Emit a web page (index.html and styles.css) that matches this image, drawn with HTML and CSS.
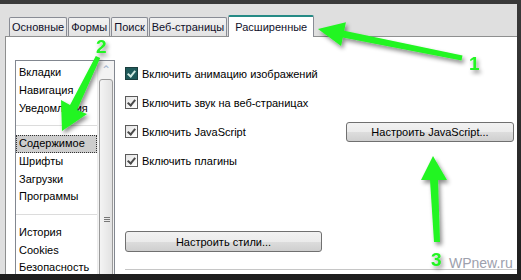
FILE: index.html
```html
<!DOCTYPE html>
<html lang="ru">
<head>
    <meta charset="UTF-8">
    <title>Настройки — Расширенные</title>
    <link rel="stylesheet" href="styles.css">
</head>
<body>

<div class="frame">
    <div class="window">
        <div class="tabs">
            <div class="tab">Основные</div>
            <div class="tab">Формы</div>
            <div class="tab">Поиск</div>
            <div class="tab">Веб-страницы</div>
            <div class="tab active">Расширенные</div>
        </div>

        <div class="pane">
            <div class="list">
                <div class="items">
                    <div class="item">Вкладки</div>
                    <div class="item">Навигация</div>
                    <div class="item">Уведомления</div>
                    <div class="sep"></div>
                    <div class="item selected">Содержимое</div>
                    <div class="item">Шрифты</div>
                    <div class="item">Загрузки</div>
                    <div class="item">Программы</div>
                    <div class="sep"></div>
                    <div class="item">История</div>
                    <div class="item">Cookies</div>
                    <div class="item">Безопасность</div>
                </div>
                <div class="scrollbar">
                    <div class="scroll-up">&#8963;</div>
                    <div class="thumb"><span class="grip"></span></div>
                </div>
            </div>

            <div class="content">
                <div class="row">
                    <span class="check focused"></span>
                    <span>Включить анимацию изображений</span>
                </div>
                <div class="row">
                    <span class="check"></span>
                    <span>Включить звук на веб-страницах</span>
                </div>
                <div class="row">
                    <span class="check"></span>
                    <span>Включить JavaScript</span>
                    <button class="btn btn-js">Настроить JavaScript...</button>
                </div>
                <div class="row">
                    <span class="check"></span>
                    <span>Включить плагины</span>
                </div>

                <button class="btn btn-styles">Настроить стили...</button>
                <div class="rule"></div>
            </div>
        </div>
    </div>

    <div class="watermark">WPnew.ru</div>

    <!-- green annotation arrows drawn over the screenshot -->
    <svg class="marks" width="521" height="280" viewBox="0 0 521 280">
        <defs>
            <filter id="shade" x="-20%" y="-20%" width="140%" height="140%">
                <feDropShadow dx="2" dy="3" stdDeviation="2" flood-color="#000" flood-opacity="0.45"/>
            </filter>
        </defs>
        <g fill="#22f522" filter="url(#shade)">
            <polygon points="318,29 345.9,22.3 344.2,30.7 462.5,55.5 461.5,60.5 342.8,37.5 341.1,45.9"/>
            <polygon points="62,131 61,100 70,105 95.8,55.9 100.2,58.1 77,110 87,114"/>
            <polygon points="433,156 447,180 438,180 440,242 434,242 430,180 421,180"/>
        </g>
        <g class="num" fill="#22f522" filter="url(#shade)">
            <text x="469" y="70">1</text>
            <text x="96" y="53">2</text>
            <text x="431" y="266">3</text>
        </g>
    </svg>
</div>

</body>
</html>
```

FILE: styles.css
```css
body {
    margin: 0;
    background: #fff;
    font-family: "Liberation Sans", Arial, sans-serif;
    font-size: 11px;
    color: #000;
}
.frame {
    position: relative;
    width: 521px;
    height: 280px;
    overflow: hidden;
    background: linear-gradient(#3a3a3a, #1e1e1e);
}
.window {
    margin-top: 4px;
    width: 517px;
    height: 270px;
    background: #dfdfdf;
    overflow: hidden;
}
.tabs {
    display: flex;
    align-items: flex-end;
    height: 32px;
    padding-left: 9px;
}
.tab {
    height: 18px;
    line-height: 19px;
    padding: 0 2px;
    margin-right: 1px;
    border: 1px solid #898c95;
    border-bottom: none;
    border-radius: 2px 2px 0 0;
    background: linear-gradient(#f2f2f2, #e3e3e3);
    color: #10102a;
}
.tab.active {
    height: 20px;
    line-height: 21px;
    margin-bottom: -1px;
    padding: 0 6px;
    border-top: 2px solid #258a85;
    background: #fff;
    position: relative;
}
.pane {
    display: flex;
    margin-left: 5px;
    height: 240px;
    background: #fff;
    border: 1px solid #8e8f8f;
    border-right: none;
}
.list {
    display: flex;
    width: 98px;
    height: 240px;
    margin: 23px 0 0 9px;
    border: 1px solid #828790;
}
.items {
    flex: 1;
    padding-top: 3px;
}
.item {
    height: 17.75px;
    line-height: 17.75px;
    padding-left: 3px;
    white-space: nowrap;
    overflow: hidden;
    color: #000;
}
.item.selected {
    background: #cdcdcd;
    outline: 1px dotted #333;
    outline-offset: -1px;
}
.sep {
    height: 17.75px;
    background: linear-gradient(#fff 8px, #dcdcdc 8px, #dcdcdc 9px, #fff 9px);
}
.scrollbar {
    width: 16px;
    background: #f3f3f3;
    border-left: 1px solid #ececec;
}
.scroll-up {
    height: 16px;
    text-align: center;
    line-height: 18px;
    color: #a7b8cf;
    font-size: 12px;
}
.thumb {
    margin: 2px 1px 0;
    height: 230px;
    border: 1px solid #9a9a9a;
    border-radius: 3px;
    background: linear-gradient(90deg, #f4f4f4, #e2e2e2);
    position: relative;
}
.grip {
    position: absolute;
    left: 4px;
    top: 137px;
    width: 6px;
    height: 5px;
    background: linear-gradient(#777 1px, transparent 1px, transparent 2px, #777 2px, #777 3px, transparent 3px, transparent 4px, #777 4px);
}
.content {
    flex: 1;
    display: flex;
    flex-direction: column;
    margin-left: 10px;
    padding-top: 22px;
}
.row {
    display: flex;
    align-items: center;
    height: 29px;
    gap: 4px;
}
.check {
    width: 11px;
    height: 11px;
    border: 1px solid #5a5a5a;
    background: linear-gradient(135deg, #e4e4e4, #fff);
    position: relative;
}
.check::after {
    content: "";
    position: absolute;
    left: 3px;
    top: 1px;
    width: 3px;
    height: 6px;
    border: solid #4a4a4a;
    border-width: 0 2px 2px 0;
    transform: rotate(40deg);
}
.check.focused {
    background: #1f5a5a;
    border-color: #1a3e3e;
}
.check.focused::after {
    border-color: #cfe8e0;
}
.btn {
    font-family: "Liberation Sans", Arial, sans-serif;
    font-size: 11px;
    color: #000;
    border: 1px solid #707070;
    border-radius: 3px;
    background: linear-gradient(#f2f2f2 0%, #ebebeb 50%, #dddddd 51%, #cfcfcf 100%);
    padding: 0;
}
.btn-js {
    margin-left: auto;
    margin-right: 3px;
    width: 168px;
    height: 20px;
}
.btn-styles {
    margin-top: 56px;
    width: 197px;
    height: 21px;
}
.rule {
    margin-top: 17px;
    height: 1px;
    background: #c6c6c6;
}
.watermark {
    position: absolute;
    left: 449px;
    top: 255px;
    color: #9da0ad;
    font-size: 14px;
    font-family: "Liberation Sans", Arial, sans-serif;
}
.marks {
    position: absolute;
    left: 0;
    top: 0;
}
.num text {
    font-family: "Liberation Sans", Arial, sans-serif;
    font-size: 19px;
    font-weight: bold;
}
```
